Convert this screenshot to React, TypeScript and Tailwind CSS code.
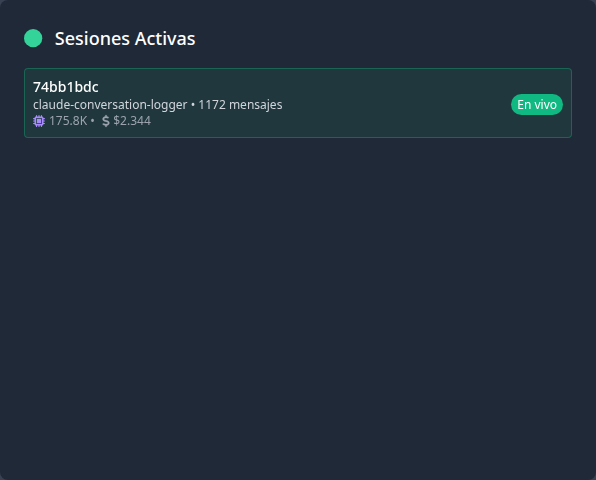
import { FaCircle, FaDollarSign, FaMicrochip } from 'react-icons/fa6';

export default function App() {
  return (
    <div className="h-screen bg-[#374151] font-['Noto_Sans',sans-serif]">
      <section className="h-full rounded-lg bg-[#1f2937] p-6">
        <h3 className="mb-4 flex items-center text-lg font-medium text-white">
          <FaCircle className="mr-[12.5px] size-[18.3px] overflow-visible text-[#34d399]" />
          Sesiones Activas
        </h3>
        <div className="flex h-[70px] items-center justify-between rounded border border-[#10b981]/35 bg-[#20383d] px-2 will-change-transform">
          <div>
            <p className="text-sm leading-5 font-medium text-white">74bb1bdc</p>
            <p className="text-xs leading-4 text-[#d1d5db]">claude-conversation-logger • 1172 mensajes</p>
            <p className="flex items-center text-xs leading-4 text-[#9ca3af]">
              <FaMicrochip className="mr-1 size-3 text-[#a78bfa]" />
              <span>175.8K •</span>
              <FaDollarSign className="mr-[1.5px] ml-[5px] size-3 overflow-visible" strokeWidth={12} />
              <span>$2.344</span>
            </p>
          </div>
          <span className="mt-0.5 rounded-full bg-[#10b981] px-1.5 py-0.5 text-xs leading-[17px] text-white">En vivo</span>
        </div>
      </section>
    </div>
  );
}
